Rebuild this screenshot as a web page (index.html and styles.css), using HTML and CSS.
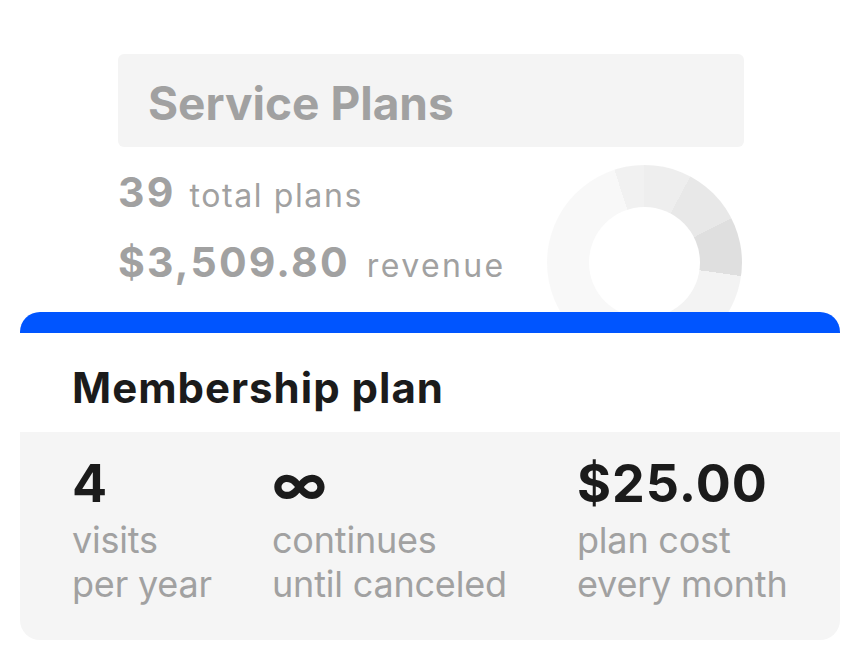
FILE: index.html
```html
<!DOCTYPE html>
<html lang="en">
<head>
<meta charset="utf-8">
<title>Service Plans</title>
<link rel="stylesheet" href="styles.css">
</head>
<body>
<section class="summary">
  <div class="summary-title">Service Plans</div>
  <div class="summary-body">
    <div class="summary-stats">
      <div class="stat-line"><span class="num">39</span><span class="unit">total plans</span></div>
      <div class="stat-line"><span class="num">$3,509.80</span><span class="unit">revenue</span></div>
    </div>
    <div class="donut"></div>
  </div>
</section>
<section class="plan-card">
  <div class="plan-accent"></div>
  <h2 class="plan-name">Membership plan</h2>
  <div class="plan-stats">
    <div class="plan-stat">
      <div class="plan-value">4</div>
      <div class="plan-label">visits<br>per year</div>
    </div>
    <div class="plan-stat">
      <div class="plan-value infinity">∞</div>
      <div class="plan-label">continues<br>until canceled</div>
    </div>
    <div class="plan-stat">
      <div class="plan-value">$25.00</div>
      <div class="plan-label">plan cost<br>every month</div>
    </div>
  </div>
</section>
</body>
</html>
```
FILE: styles.css
```css
* { box-sizing: border-box; }
html, body { margin: 0; padding: 0; background: #ffffff; }
body {
  font-family: "Inter", "Noto Sans", sans-serif;
  width: 864px;
  height: 668px;
  overflow: hidden;
}
.summary {
  height: 312px;
  overflow: hidden;
  padding: 54px 0 0 118px;
}
.summary-title {
  width: 626px;
  height: 93px;
  background: #f4f4f4;
  border-radius: 6px;
  padding: 6px 0 0 30px;
  font-size: 46px;
  font-weight: 700;
  letter-spacing: 0;
  line-height: 87px;
  color: #a1a1a1;
}
.summary-body {
  display: flex;
  justify-content: space-between;
  width: 626px;
}
.summary-stats { padding-top: 10px; }
.stat-line {
  height: 70px;
  font-size: 41px;
  line-height: 70px;
  white-space: nowrap;
  color: #a1a1a1;
}
.num {
  font-size: 41px;
  font-weight: 700;
  letter-spacing: 2.2px;
  margin-right: 14px;
}
.stat-line + .stat-line .num { margin-right: 17px; }
.unit {
  font-size: 32px;
  font-weight: 400;
  letter-spacing: 1.6px;
}
.stat-line + .stat-line .unit { letter-spacing: 2.4px; }
.donut {
  position: relative;
  margin-top: 18px;
  margin-right: 2px;
  width: 195px;
  height: 195px;
  border-radius: 50%;
  background: conic-gradient(#eeeeee 0deg 28deg, #e8e8e8 28deg 63deg, #dfdfdf 63deg 98deg, #f3f3f3 98deg 160deg, #f8f8f8 160deg 342deg, #f1f1f1 342deg 360deg);
}
.donut::after {
  content: "";
  position: absolute;
  inset: 42px;
  border-radius: 50%;
  background: #ffffff;
}
.plan-card {
  margin: 0 24px 0 20px;
  background: #ffffff;
}
.plan-accent {
  height: 21px;
  background: #0055ff;
  border-radius: 20px 20px 0 0;
}
.plan-name {
  margin: 0;
  padding: 32px 0 21px 52px;
  font-size: 42px;
  line-height: 46px;
  font-weight: 700;
  letter-spacing: 1px;
  color: #1b1b1b;
}
.plan-stats {
  display: grid;
  grid-template-columns: 200px 305px auto;
  background: #f5f5f5;
  border-radius: 0 0 20px 20px;
  padding: 24px 0 34px 52px;
}
.plan-value {
  font-size: 52px;
  line-height: 56px;
  font-weight: 700;
  letter-spacing: 1px;
  color: #1b1b1b;
  margin-bottom: 6px;
}
.plan-value.infinity {
  font-size: 56px;
  letter-spacing: 0;
}
.plan-label {
  font-size: 36px;
  line-height: 44px;
  font-weight: 400;
  letter-spacing: -0.2px;
  color: #a1a1a1;
  white-space: nowrap;
}
```
